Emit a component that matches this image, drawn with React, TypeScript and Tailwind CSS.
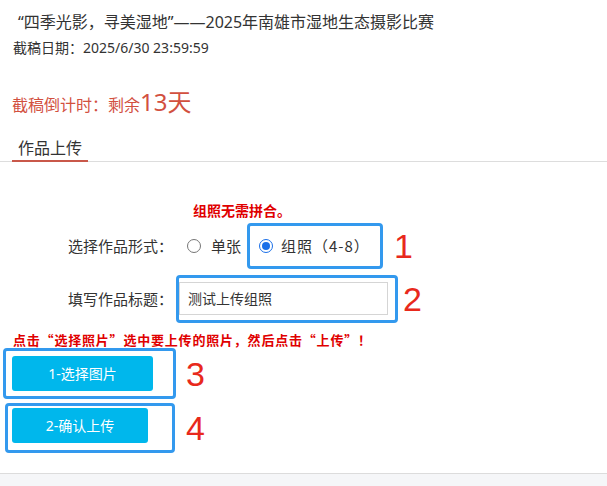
import React from 'react';

const FONT = '"Noto Sans", "Noto Sans CJK SC", sans-serif';
const CJK = '"Noto Sans CJK SC", sans-serif';

const Mark = ({ n, gap }: { n: string; gap: string }) => (
  <span
    className={`text-[#e8291c] text-[34px] leading-none ${gap}`}
    style={{ fontFamily: '"Liberation Sans", sans-serif' }}
  >
    {n}
  </span>
);

export default function App() {
  return (
    <div className="w-[607px] h-[486px] bg-white overflow-hidden flex flex-col text-[#333]" style={{ fontFamily: FONT }}>
      <div className="pl-[18px] mt-[11px] h-[22px] text-[16px] leading-[22px]">
        “四季光影，寻美湿地”——2025年南雄市湿地生态摄影比赛
      </div>
      <div className="pl-[13px] mt-[5px] h-[20px] text-[14px] leading-[20px]">截稿日期：2025/6/30 23:59:59</div>

      {/* countdown */}
      <div className="pl-[12px] mt-[29px] h-[30px] flex items-baseline text-[#d2503f]">
        <span className="text-[16px] leading-[30px]">截稿倒计时：剩余</span>
        <span className="text-[24px] leading-[30px]">13天</span>
      </div>

      {/* tabs */}
      <div className="mt-[20px] h-[25px] border-b border-[#dddddd] flex">
        <span className="ml-[12px] px-[6px] h-[25px] text-[16px] leading-[22px] border-b-2 border-[#c9584a]">作品上传</span>
      </div>

      <div className="pl-[193px] mt-[38px] h-[20px] text-[14px] leading-[20px] font-bold text-[#e00000]" style={{ fontFamily: CJK }}>
        组照无需拼合。
      </div>

      <div className="flex items-center mt-[3px] h-[46px]">
        <span className="w-[173px] text-right text-[15px]">选择作品形式：</span>
        <span className="ml-[14px] w-[14px] h-[14px] rounded-full border border-[#767676] bg-white" />
        <span className="ml-[10px] text-[15px]">单张</span>
        <div className="ml-[6px] w-[136px] h-[46px] border-[3px] border-[#3399ee] rounded-[4px] flex items-center pl-[9px]">
          <span className="w-[14px] h-[14px] rounded-full border-[1.5px] border-[#1a6fe8] bg-white flex items-center justify-center">
            <span className="w-[8px] h-[8px] rounded-full bg-[#1a6fe8]" />
          </span>
          <span className="ml-[8px] text-[15px] tracking-[1px]" style={{ fontFamily: CJK }}>
            组照（4-8）
          </span>
        </div>
        <Mark n="1" gap="ml-[11px]" />
      </div>

      <div className="flex items-center mt-[6px] h-[48px]">
        <span className="w-[173px] text-right text-[15px]">填写作品标题：</span>
        <div className="ml-[3px] w-[222px] h-[48px] border-[3px] border-[#3399ee] rounded-[4px] pt-[4px]">
          <div className="w-[209px] h-[33px] border border-[#d5d5d5] flex items-center pl-[8px] text-[14px]">测试上传组照</div>
        </div>
        <Mark n="2" gap="ml-[5px]" />
      </div>

      <div
        className="pl-[13px] mt-[9px] h-[16px] text-[13px] leading-[16px] tracking-[0.8px] font-bold text-[#e00000]"
        style={{ fontFamily: CJK }}
      >
        点击“选择照片”选中要上传的照片，然后点击“上传”！
      </div>

      <div className="flex items-center ml-[3px]">
        <div className="w-[173px] h-[51px] border-[3px] border-[#3399ee] rounded-[4px] pl-[6px] pt-[5px]">
          <button className="w-[141px] h-[35px] rounded-[3px] bg-[#00b7ec] text-white text-[14px]">1-选择图片</button>
        </div>
        <Mark n="3" gap="ml-[10px]" />
      </div>

      <div className="flex items-center ml-[5px] mt-[4px]">
        <div className="w-[170px] h-[50px] border-[3px] border-[#3399ee] rounded-[4px] pl-[4px] pt-[2px]">
          <button className="w-[136px] h-[35px] rounded-[3px] bg-[#00b7ec] text-white text-[14px]">2-确认上传</button>
        </div>
        <Mark n="4" gap="ml-[11px]" />
      </div>

      <div className="flex-1" />
      <div className="h-[13px] border-t border-[#dcdcdc] bg-[#f5f6f8]" />
    </div>
  );
}
